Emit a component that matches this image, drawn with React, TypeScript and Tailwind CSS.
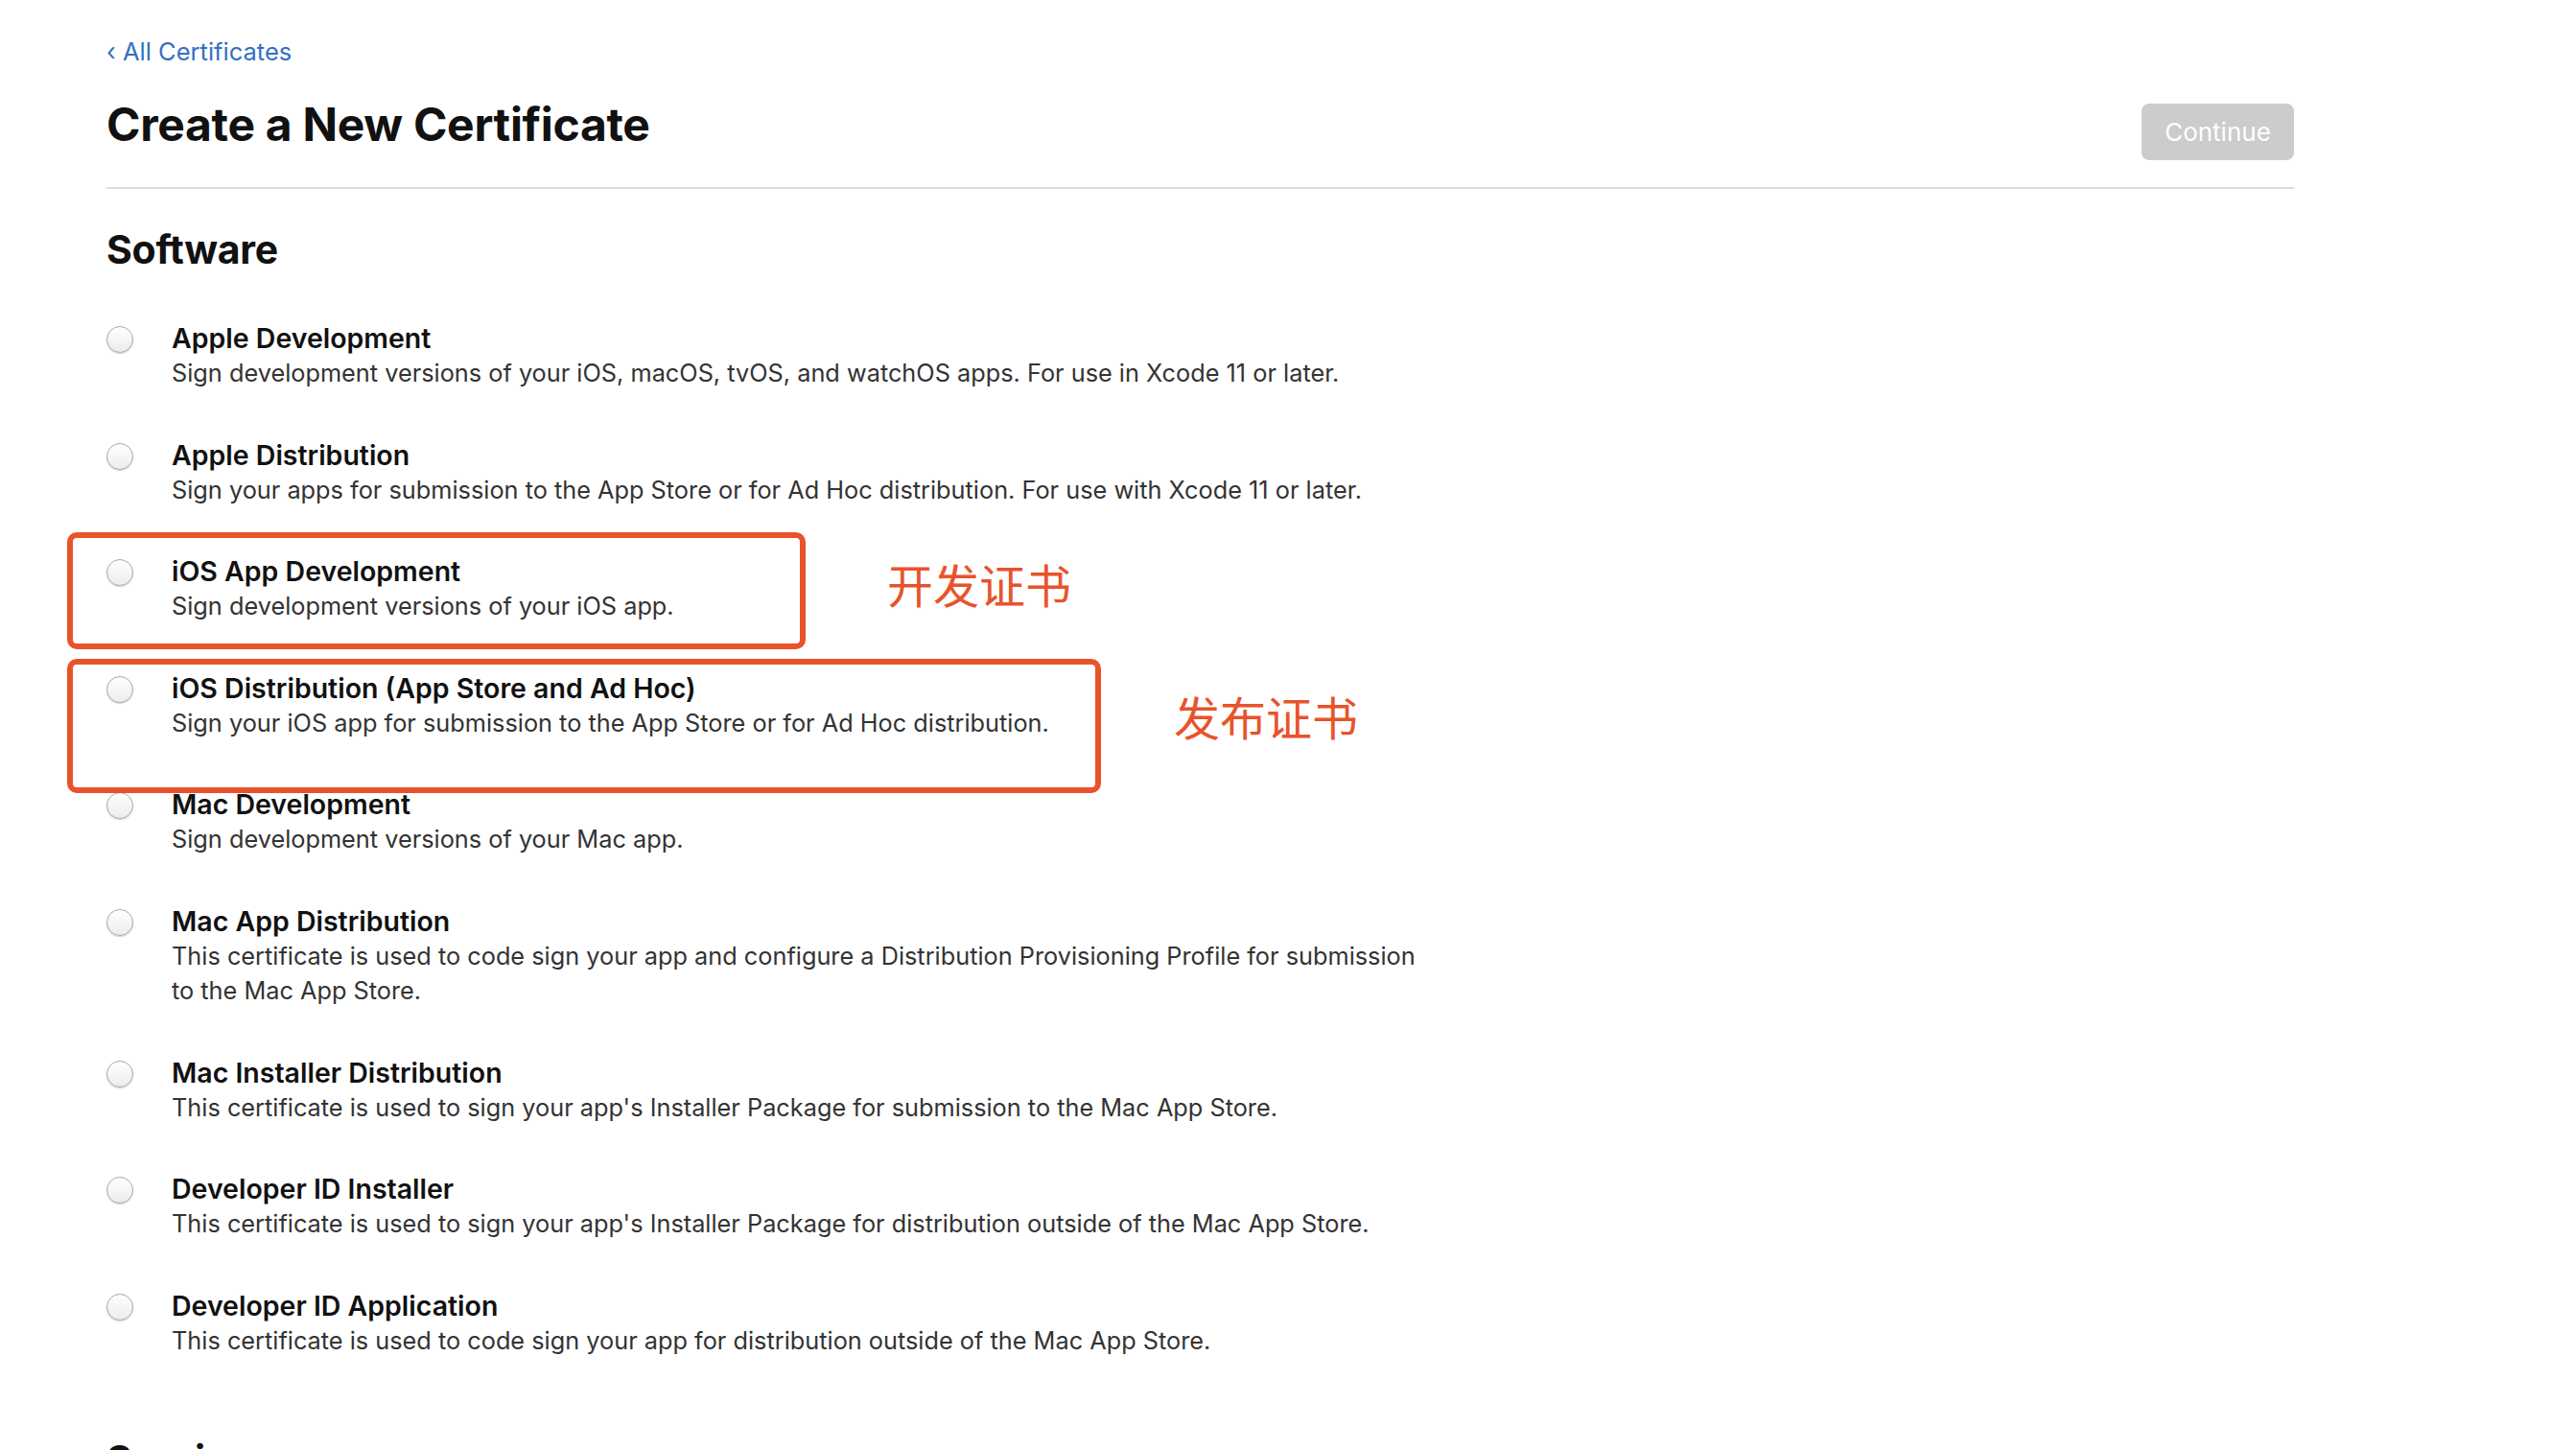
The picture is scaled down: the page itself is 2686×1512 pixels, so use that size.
import * as React from "react";

const CERTS = [
  {
    title: "Apple Development",
    desc: ["Sign development versions of your iOS, macOS, tvOS, and watchOS apps. For use in Xcode 11 or later."],
  },
  {
    title: "Apple Distribution",
    desc: ["Sign your apps for submission to the App Store or for Ad Hoc distribution. For use with Xcode 11 or later."],
  },
  {
    title: "iOS App Development",
    desc: ["Sign development versions of your iOS app."],
  },
  {
    title: "iOS Distribution (App Store and Ad Hoc)",
    desc: ["Sign your iOS app for submission to the App Store or for Ad Hoc distribution."],
  },
  {
    title: "Mac Development",
    desc: ["Sign development versions of your Mac app."],
  },
  {
    title: "Mac App Distribution",
    desc: [
      "This certificate is used to code sign your app and configure a Distribution Provisioning Profile for submission",
      "to the Mac App Store.",
    ],
  },
  {
    title: "Mac Installer Distribution",
    desc: ["This certificate is used to sign your app's Installer Package for submission to the Mac App Store."],
  },
  {
    title: "Developer ID Installer",
    desc: ["This certificate is used to sign your app's Installer Package for distribution outside of the Mac App Store."],
  },
  {
    title: "Developer ID Application",
    desc: ["This certificate is used to code sign your app for distribution outside of the Mac App Store."],
  },
];

function Radio() {
  return (
    <span className="mt-[6px] block h-[28px] w-[28px] shrink-0 rounded-full border-[1.5px] border-[#a8a8a8] bg-gradient-to-b from-white to-[#ececec] shadow-[0_1px_1px_rgba(0,0,0,0.18)]" />
  );
}

function CertRow({ title, desc }: { title: string; desc: string[] }) {
  return (
    <label className="flex items-start gap-[40px] cursor-pointer">
      <Radio />
      <div>
        <div className="text-[28.5px] leading-[37px] font-semibold text-[#111]">{title}</div>
        {desc.map((line) => (
          <div key={line} className="text-[25.3px] leading-[36px] text-[#333]">
            {line}
          </div>
        ))}
      </div>
    </label>
  );
}

export default function App() {
  return (
    <div className="relative min-h-screen overflow-hidden bg-white font-['Inter','Noto_Sans_CJK_SC',sans-serif] antialiased">
      <div className="ml-[111px] w-[2281px] pt-[38px]">
        <a href="#" className="block text-[25.5px] leading-[32px] text-[#3470c0]">
          ‹ All Certificates
        </a>

        {/* Header */}
        <div className="mt-[31px] flex items-start justify-between border-b-2 border-[#dddddd] pb-[28px]">
          <h1 className="text-[48px] leading-[58px] font-bold tracking-[-0.3px] text-[#111]">
            Create a New Certificate
          </h1>
          <button
            disabled
            className="mt-[7px] h-[59px] w-[159px] rounded-[8px] bg-[#cccccc] text-[26px] text-white"
          >
            Continue
          </button>
        </div>

        <h2 className="mt-[38px] text-[41px] leading-[50px] font-bold tracking-[-0.3px] text-[#111]">Software</h2>

        <div className="mt-[49px] flex flex-col gap-[48.6px]">
          {CERTS.map((c) => (
            <CertRow key={c.title} title={c.title} desc={c.desc} />
          ))}
        </div>

        <h2 className="mt-[81px] text-[41px] leading-[50px] font-bold tracking-[-0.3px] text-[#111]">Services</h2>
      </div>

      {/* Annotations */}
      <div className="absolute left-[70px] top-[555px] h-[122px] w-[770px] rounded-[10px] border-[6px] border-[#e8532b]" />
      <div className="absolute left-[70px] top-[687px] h-[140px] w-[1078px] rounded-[10px] border-[6px] border-[#e8532b]" />
      <div className="absolute left-[925px] top-[584px] text-[48px] leading-none text-[#e8532b] font-['Noto_Sans_CJK_SC',sans-serif]">
        开发证书
      </div>
      <div className="absolute left-[1224px] top-[722px] text-[48px] leading-none text-[#e8532b] font-['Noto_Sans_CJK_SC',sans-serif]">
        发布证书
      </div>
    </div>
  );
}
